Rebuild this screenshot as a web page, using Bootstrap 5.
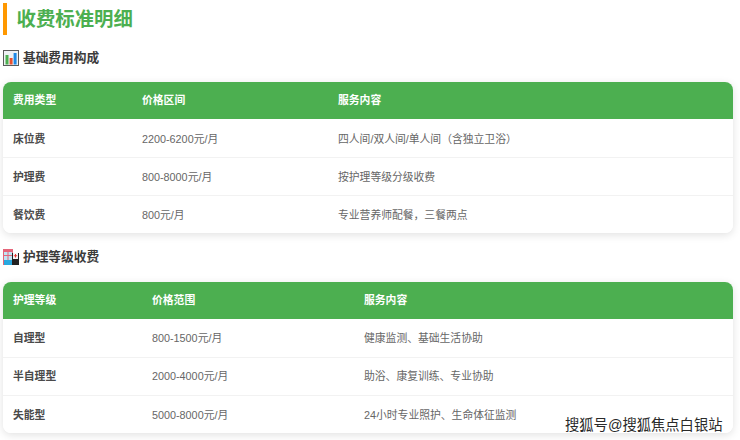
<!DOCTYPE html>
<html lang="zh">
<head>
<meta charset="utf-8">
<title>收费标准明细</title>
<link href="https://cdn.jsdelivr.net/npm/bootstrap@5.3.0/dist/css/bootstrap.min.css" rel="stylesheet">
<style>
html,body{width:740px;height:440px;overflow:hidden;background:#fff;}
body{font-family:"Liberation Sans","Noto Sans CJK SC",sans-serif;color:#555;position:relative;}
.pg{padding:3px 7px 0 3px;}
.ttl{border-left:4px solid #ff9800;height:32px;padding-left:9.5px;margin:0;font-size:19.4px;line-height:33px;font-weight:700;color:#4caf50;}
.sub{display:flex;align-items:center;gap:4px;margin:0;font-size:12.7px;line-height:20px;font-weight:700;color:#3c3c3c;}
.sub svg{flex:none;}
.s1{margin-top:13px;}
.s2{margin-top:14px;}
.wrap{border-radius:8px;overflow:hidden;background:#fff;box-shadow:0 2px 8px rgba(0,0,0,.12);margin-top:14px;}
.s2 + .wrap{margin-top:15px;}
.tb{width:730px;table-layout:fixed;margin:0;border-collapse:collapse;font-size:10.8px;color:#666;}
.tb th{background:#4caf50;color:#fff;height:37px;padding:0 10px;font-weight:700;border:0;vertical-align:middle;}
.tb td{height:38px;padding:2px 10px 0;border:0;border-top:1px solid #f2f2f2;vertical-align:middle;color:#666;background:#fff;}
.s2 + .wrap .tb td{padding-top:1px;}
.tb tr:first-child td{border-top:0;}
.tb td:first-child{font-weight:700;color:#4a4a4a;}
.a1{width:129px}.a2{width:196px}
.b1{width:139px}.b2{width:212px}
.mark-wm{position:absolute;left:565px;top:415px;font-size:14.3px;line-height:20px;color:#2a2a2a;white-space:nowrap;text-shadow:0 0 2px #fff,0 0 2px #fff;}
</style>
</head>
<body>
<div class="pg">
<h2 class="ttl">收费标准明细</h2>
<h3 class="sub s1">
<svg width="16" height="16" viewBox="0 0 16 16"><rect x=".5" y=".5" width="15" height="15" fill="#eef1f4" stroke="#5a5a5a"/><rect x="2.5" y="5" width="3" height="9.5" fill="#4caf50"/><rect x="6.6" y="8" width="3" height="6.5" fill="#e8502f"/><rect x="10.6" y="3" width="3" height="11.5" fill="#1e88e5"/></svg>
基础费用构成</h3>
<div class="wrap">
<table class="tb"><colgroup><col class="a1"><col class="a2"><col></colgroup>
<thead><tr><th>费用类型</th><th>价格区间</th><th>服务内容</th></tr></thead>
<tbody>
<tr><td>床位费</td><td>2200-6200元/月</td><td>四人间/双人间/单人间（含独立卫浴）</td></tr>
<tr><td>护理费</td><td>800-8000元/月</td><td>按护理等级分级收费</td></tr>
<tr><td>餐饮费</td><td>800元/月</td><td>专业营养师配餐，三餐两点</td></tr>
</tbody></table>
</div>
<h3 class="sub s2">
<svg width="16" height="18" viewBox="0 0 16 18"><rect x="0" y="1" width="10" height="16" fill="#e5667a"/><rect x="1" y="4" width="8" height="13" fill="#bfe6f5"/><rect x="1" y="7" width="8" height="1" fill="#e5667a"/><rect x="4.5" y="4" width="1" height="13" fill="#e5667a"/><rect x="1" y="12" width="8" height="5" fill="#29a9e0"/><rect x="9" y="5" width="7" height="12" fill="#222"/><rect x="10" y="5" width="5" height="6" fill="#f6f6f6"/><path d="M12 6h1v1.2h1.2v1H13v1.2h-1V8.2h-1.2v-1H12z" fill="#e53935"/></svg>
护理等级收费</h3>
<div class="wrap">
<table class="tb"><colgroup><col class="b1"><col class="b2"><col></colgroup>
<thead><tr><th>护理等级</th><th>价格范围</th><th>服务内容</th></tr></thead>
<tbody>
<tr><td>自理型</td><td>800-1500元/月</td><td>健康监测、基础生活协助</td></tr>
<tr><td>半自理型</td><td>2000-4000元/月</td><td>助浴、康复训练、专业协助</td></tr>
<tr><td>失能型</td><td>5000-8000元/月</td><td>24小时专业照护、生命体征监测</td></tr>
</tbody></table>
</div>
</div>
<div class="mark-wm">搜狐号@搜狐焦点白银站</div>
</body>
</html>
